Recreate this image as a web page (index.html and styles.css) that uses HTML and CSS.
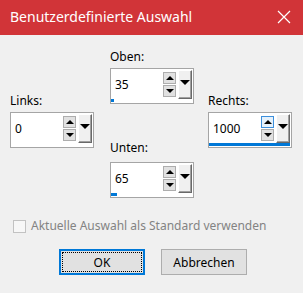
FILE: index.html
```html
<!DOCTYPE html>
<html lang="de">
<head>
<meta charset="utf-8">
<title>Benutzerdefinierte Auswahl</title>
<link rel="stylesheet" href="styles.css">
</head>
<body>
<div class="window">
  <div class="titlebar">
    <span class="title">Benutzerdefinierte Auswahl</span>
    <svg class="close" width="14" height="14" viewBox="0 0 14 14"><path d="M1 1 L13 13 M13 1 L1 13" stroke="#fff" stroke-width="1.2" fill="none"/></svg>
  </div>
  <div class="content">
    <div class="fields">
      <div class="col col-side">
        <div class="field">
          <div class="label">Links:</div>
          <div class="spin">
            <div class="row">
              <span class="value">0</span>
              <div class="arrows">
                <span class="arrow"><i class="tri-up"></i></span>
                <span class="arrow"><i class="tri-down"></i></span>
              </div>
              <span class="drop"><i class="tri-drop"></i></span>
            </div>
            <div class="track"><span class="bar" style="width:0%"></span></div>
          </div>
        </div>
      </div>
      <div class="col col-mid">
        <div class="field">
          <div class="label">Oben:</div>
          <div class="spin">
            <div class="row">
              <span class="value">35</span>
              <div class="arrows">
                <span class="arrow"><i class="tri-up"></i></span>
                <span class="arrow"><i class="tri-down"></i></span>
              </div>
              <span class="drop"><i class="tri-drop"></i></span>
            </div>
            <div class="track"><span class="bar" style="width:3.5%"></span></div>
          </div>
        </div>
        <div class="field field-low">
          <div class="label label-low">Unten:</div>
          <div class="spin">
            <div class="row">
              <span class="value">65</span>
              <div class="arrows">
                <span class="arrow"><i class="tri-up"></i></span>
                <span class="arrow"><i class="tri-down"></i></span>
              </div>
              <span class="drop"><i class="tri-drop"></i></span>
            </div>
            <div class="track"><span class="bar" style="width:7.5%"></span></div>
          </div>
        </div>
      </div>
      <div class="col col-side col-right">
        <div class="field">
          <div class="label">Rechts:</div>
          <div class="spin">
            <div class="row">
              <span class="value">1000</span>
              <div class="arrows">
                <span class="arrow arrow-hot"><i class="tri-up"></i></span>
                <span class="arrow"><i class="tri-down"></i></span>
              </div>
              <span class="drop"><i class="tri-drop"></i></span>
            </div>
            <div class="track"><span class="bar" style="width:100%"></span></div>
          </div>
        </div>
      </div>
    </div>
    <label class="check"><span class="box"></span><span class="check-text">Aktuelle Auswahl als Standard verwenden</span></label>
    <div class="buttons">
      <button class="btn btn-default"><span class="focus">OK</span></button>
      <button class="btn">Abbrechen</button>
    </div>
  </div>
</div>
</body>
</html>
```

FILE: styles.css
```css
* { box-sizing: border-box; }
html, body { margin: 0; padding: 0; }
body {
  width: 303px;
  height: 293px;
  overflow: hidden;
  background: #f0f0f0;
  font-family: "Noto Sans", "Open Sans", sans-serif;
  font-size: 12px;
  color: #000;
}
.window { width: 303px; height: 293px; background: #f0f0f0; }
.titlebar {
  height: 35px;
  background: #d13438;
  display: flex;
  align-items: center;
  padding: 0 12px 0 10px;
}
.title {
  color: #fff;
  font-size: 14px;
  flex: 1;
  line-height: 20px;
  margin-top: -1px;
}
.close { display: block; margin-top: -1px; }
.content { padding: 0; }
.fields { display: flex; height: 165px; }
.col { display: flex; flex-direction: column; width: 84px; }
.col-side { margin-left: 10px; padding-top: 58px; }
.col-mid { margin-left: 16px; padding-top: 14px; }
.col-right { margin-left: 14px; }
.field { display: flex; flex-direction: column; }
.field-low { margin-top: 36px; }
.label { line-height: 16px; height: 16px; margin-bottom: 3px; }
.label-low { margin-bottom: 6px; }
.spin {
  width: 84px;
  height: 36px;
  border: 1px solid #a5a5a5;
  background: #fff;
  display: flex;
  flex-direction: column;
}
.row { display: flex; height: 30px; }
.value {
  flex: 1;
  padding-left: 4px;
  padding-top: 8px;
  line-height: 16px;
}
.arrows {
  display: flex;
  flex-direction: column;
  gap: 1px;
  margin-top: 3px;
  width: 13px;
}
.arrow {
  height: 12px;
  background: #e1e1e1;
  border: 1px solid #adadad;
  display: flex;
  align-items: center;
  justify-content: center;
}
.arrow-hot { background: #e5f1fb; border-color: #3c8fdc; }
.tri-up { width: 0; height: 0; border-left: 4px solid transparent; border-right: 4px solid transparent; border-bottom: 4px solid #000; }
.tri-down { width: 0; height: 0; border-left: 4px solid transparent; border-right: 4px solid transparent; border-top: 4px solid #000; }
.drop {
  width: 14px;
  height: 29px;
  margin: 1px 1px 0 2px;
  background: #f0f0f0;
  border-top: 1px solid #fff;
  border-left: 1px solid #fff;
  border-right: 1px solid #696969;
  border-bottom: 1px solid #696969;
  box-shadow: inset -1px -1px 0 #a0a0a0;
  display: flex;
  justify-content: center;
  padding-top: 9px;
}
.tri-drop { width: 0; height: 0; border-left: 5px solid transparent; border-right: 5px solid transparent; border-top: 5px solid #000; }
.track { height: 4px; padding: 0 1px 1px 0; }
.bar { display: block; height: 3px; background: #0078d7; }
.check {
  display: flex;
  align-items: center;
  padding-left: 13px;
  height: 16px;
  margin-top: 18px;
}
.box {
  width: 13px;
  height: 13px;
  border: 1px solid #c2c2c2;
  background: #f7f7f7;
  margin-right: 5px;
}
.check-text { color: #838383; line-height: 16px; }
.buttons {
  display: flex;
  padding-left: 59px;
  gap: 16px;
  margin-top: 15px;
}
.btn {
  font-family: "Noto Sans", "Open Sans", sans-serif;
  font-size: 12px;
  color: #000;
  background: #e1e1e1;
  border: 1px solid #adadad;
  width: 86px;
  height: 26px;
  padding: 0;
  display: flex;
  align-items: center;
  justify-content: center;
}
.btn-default { border: 2px solid #0078d7; padding: 1px; }
.focus {
  width: 100%;
  height: 100%;
  border: 1px dotted #000;
  display: flex;
  align-items: center;
  justify-content: center;
}
```
